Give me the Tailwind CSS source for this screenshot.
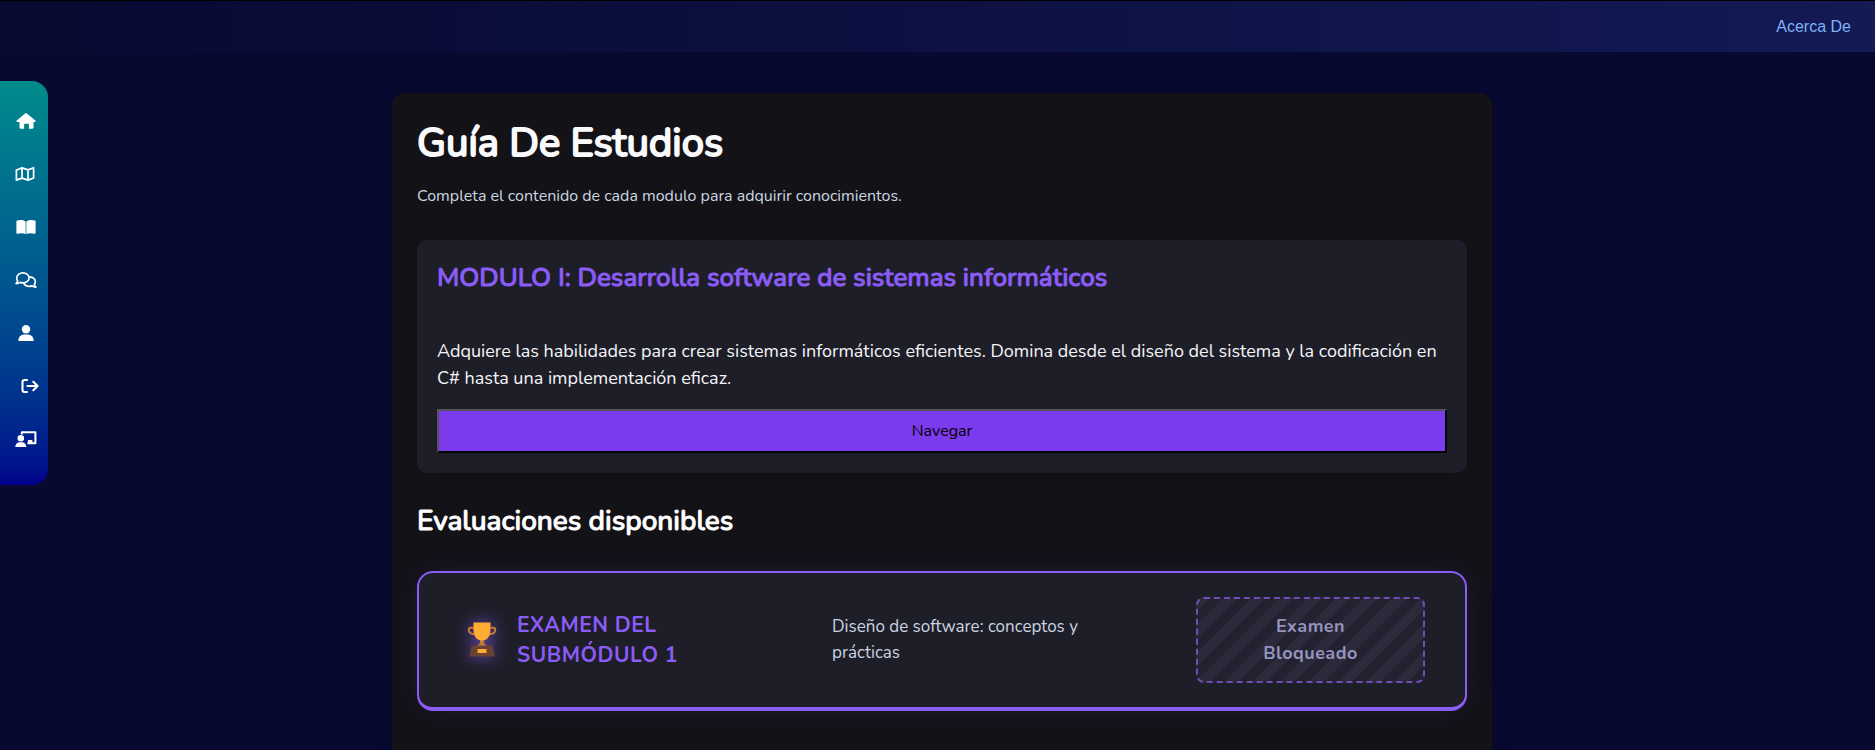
<!DOCTYPE html>
<html lang="es">
<head>
<meta charset="utf-8">
<meta name="viewport" content="width=device-width, initial-scale=1">
<title>Guía De Estudios</title>
<script src="https://cdn.jsdelivr.net/npm/@tailwindcss/browser@4"></script>
</head>
<body class="flex min-h-screen flex-col bg-[#070930] font-['Nunito',Lato,sans-serif] text-white">
  <header class="flex h-[52px] items-center justify-end border-t border-black bg-linear-to-r from-[#070930] to-[#131a54] px-6">
    <a href="#" class="font-['Liberation_Sans',sans-serif] text-base text-[#7fb2f8]">Acerca De</a>
  </header>

  <div class="flex flex-1">
    <nav aria-label="Principal" class="mt-[29px] w-12 shrink-0 self-start rounded-r-2xl bg-linear-to-b from-[#008b8b] to-[#00008b] pt-[13px] pb-5">
      <ul class="flex flex-col">
        <li><a href="#" aria-label="Inicio" class="flex h-[53px] items-center justify-center pl-1">
          <svg class="h-4 w-5" viewBox="0 0 20 16" fill="#fff"><path d="M10 .1q.5 0 .9.4l8.400 7c.6.6.3 1.500-.5 1.500h-1.300v5.400q0 1.400-1.400 1.400h-3.200v-4.200q0-.8-.8-.8H8.900q-.8 0-.8.8V15.800H4.900q-1.400 0-1.400-1.400V9H1.200C.4 9 .1 8.100.7 7.500l8.400-7Q9.500.1 10 .1Z"/></svg></a></li>
        <li><a href="#" aria-label="Mapa" class="flex h-[53px] items-center justify-center pl-0.5">
          <svg class="h-4 w-5" viewBox="0 0 20 16" fill="none" stroke="#fff" stroke-width="1.700" stroke-linejoin="round"><path d="M1.400 4 7 1.900l6 2L18.600 1.800V12L13 14.100l-6-2-5.600 2ZM7 1.900v10.200M13 3.900v10.200"/></svg></a></li>
        <li><a href="#" aria-label="Contenido" class="flex h-[53px] items-center justify-center pl-1">
          <svg class="h-4 w-5" viewBox="0 0 20 16" fill="#fff"><path d="M9.400 2.400v12.500C7.500 13.900 4.500 14 1.400 14.800Q.4 15 .4 14V2.500q0-.7.700-.9c3-.9 6-.7 8.300.8ZM10.600 2.400v12.500c1.900-1 4.900-.9 8-.1q1 .2 1-.8V2.500q0-.7-.7-.9c-3-.9-6-.7-8.300.8Z"/><path d="M9.400 2.400h1.200v12.500H9.400Z" opacity=".7"/></svg></a></li>
        <li><a href="#" aria-label="Mensajes" class="flex h-[53px] items-center justify-center pl-1">
          <svg class="h-4 w-[22px]" viewBox="0 0 22 16" fill="none" stroke="#fff" stroke-width="1.700" stroke-linejoin="round" stroke-linecap="round"><path d="M7.900.9c3.500 0 6.200 2.200 6.200 5s-2.700 5-6.200 5q-1.500 0-2.800-.5-1.600 1.200-4 1.200 1.200-1.200 1.500-2.800-.9-1.300-.9-2.900c0-2.800 2.700-5 6.200-5Z"/><path d="M14.900 4.900c3 .3 5.400 2.300 5.400 4.900q0 1.600-1 2.800.3 1.400 1.500 2.500-2.200 0-3.800-1.200-1.200.5-2.700.5c-2.300 0-4.300-1-5.300-2.600"/></svg></a></li>
        <li><a href="#" aria-label="Perfil" class="flex h-[53px] items-center justify-center pl-1">
          <svg class="h-4 w-4" viewBox="0 0 16 16" fill="#fff"><circle cx="8" cy="4.200" r="4.200"/><path d="M.4 16v-.8C.4 12 3 9.600 6.200 9.600h3.600c3.200 0 5.800 2.400 5.800 5.600v.8Z"/></svg></a></li>
        <li><a href="#" aria-label="Cerrar sesión" class="flex h-[53px] items-center justify-center pl-3">
          <svg class="h-4 w-[18px]" viewBox="0 0 18 16" fill="none" stroke="#fff" stroke-width="2.100" stroke-linecap="round" stroke-linejoin="round"><path d="M6 2H3.500Q1.500 2 1.500 4v8q0 2 2 2H6M6.500 8h10M12.300 3.800 16.600 8l-4.300 4.200"/></svg></a></li>
        <li><a href="#" aria-label="Docente" class="flex h-[53px] items-center justify-center pl-1">
          <svg class="h-4 w-[22px]" viewBox="0 0 22 16" fill="#fff"><path d="M6.800 1.200H20.400v11H12.500" fill="none" stroke="#fff" stroke-width="2" stroke-linejoin="round"/><path d="M5.800 3.200V1.800q0-1.400 1-1.400h1v3ZM12.800 10q0-1 1-1h2.700q1 0 1 1v2.500h-4.700Z"/><circle cx="5.800" cy="7.200" r="3.300"/><path d="M.3 16c0-3 2-4.700 4.300-4.700H7c2.300 0 4.300 1.700 4.300 4.700Z"/></svg></a></li>
      </ul>
    </nav>

    <div class="flex flex-1 justify-center pt-[41px] pr-[39px]">
      <main class="w-full max-w-[1100px] rounded-t-xl bg-[#121217] px-[25px] pt-[25px] shadow-[0_4px_20px_rgba(0,0,0,0.15)]">
        <h1 class="text-[40px] leading-[50px] font-normal text-[#fafafc] [-webkit-text-stroke:2px_#fafafc]">Guía De Estudios</h1>
        <p class="mt-4 text-base leading-6 text-[#cbd5e1]">Completa el contenido de cada modulo para adquirir conocimientos.</p>

        <section class="mt-8 rounded-[10px] bg-[#1e1e29] p-5 shadow-[0_4px_20px_rgba(0,0,0,0.1)]">
          <h2 class="text-[26px] leading-9 font-medium text-[#8b5cf6] [-webkit-text-stroke:1px_#8b5cf6]">MODULO I: Desarrolla software de sistemas informáticos</h2>
          <p class="mt-[42px] text-lg leading-[27px] text-[#f5f5f7]">Adquiere las habilidades para crear sistemas informáticos eficientes. Domina desde el diseño del sistema y la codificación en C# hasta una implementación eficaz.</p>
          <button type="button" class="mt-[17px] h-11 w-full border-2 border-t-[#555] border-r-black border-b-black border-l-[#555] bg-[#7c3aed] text-base text-black">Navegar</button>
        </section>

        <h2 class="mt-7 text-[28px] leading-10 font-medium [-webkit-text-stroke:1px_#fff]">Evaluaciones disponibles</h2>

        <section class="mt-[30px] flex items-center rounded-2xl border-2 border-b-4 border-[#8b5cf6] bg-[#1e1e29] py-6 pr-10 pl-12 shadow-[0_0_30px_rgba(139,92,246,0.1)]">
          <div class="flex flex-1 items-center gap-5">
            <svg class="h-9 w-[30px] shrink-0 drop-shadow-[0_0_8px_rgba(139,92,246,0.7)]" viewBox="0 0 30 36" aria-hidden="true">
              <path d="M6.500 5.800H3.500Q1.800 5.800 1.800 8c0 2.500 2.200 4 6 4.200M23.500 5.800h3q1.700 0 1.700 2.200c0 2.500-2.200 4-6 4.200" fill="none" stroke="#c87a35" stroke-width="2"/>
              <path d="M13 16h4v4.500q.5 2 3.500 3.500h-11q3-1.500 3.500-3.500Z" fill="#c87a35"/>
              <path d="M6.500.5h17V7c0 7-3 11.500-8.500 11.500S6.500 14 6.500 7Z" fill="#ffac33"/>
              <path d="M4.500 23.500h21L27.500 34.500h-25Z" fill="#6b4232"/>
              <path d="M10.500 27h9v4h-9Z" fill="#ffac33"/>
            </svg>
            <h3 class="w-48 text-[21px] leading-[30px] font-bold tracking-wide text-[#8b5cf6]">EXAMEN DEL SUBMÓDULO 1</h3>
          </div>
          <p class="w-[364px] pr-20 text-[17px] leading-[26px] text-[#cbd5e1]">Diseño de software: conceptos y prácticas</p>
          <button type="button" disabled class="w-[229px] rounded-lg border-2 border-dashed border-[#6e4fb3] bg-[repeating-linear-gradient(-45deg,#232130_0_10px,#2c2a3a_10px_20px)] px-12 py-3.5 text-lg leading-[27px] font-bold tracking-wide text-[#9494bf]">Examen Bloqueado</button>
        </section>
      </main>
    </div>
  </div>
</body>
</html>
